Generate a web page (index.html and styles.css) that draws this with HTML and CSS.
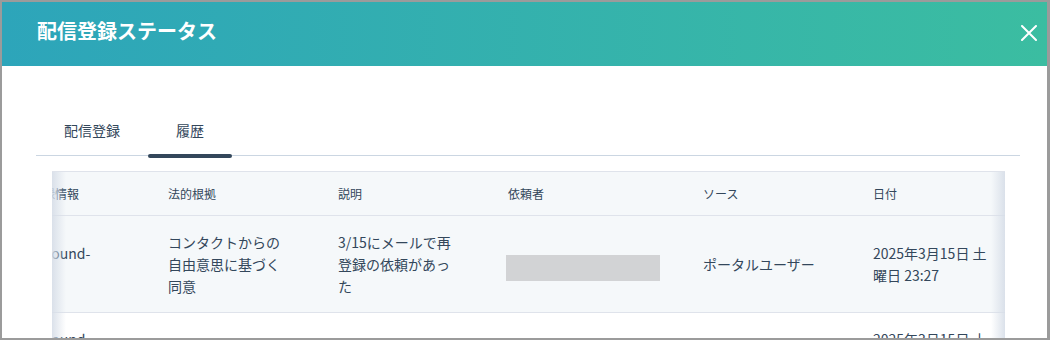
FILE: index.html
```html
<!DOCTYPE html>
<html lang="ja">
<head>
    <meta charset="UTF-8">
    <meta name="viewport" content="width=device-width, initial-scale=1.0">
    <title>配信登録ステータス</title>
    <link rel="stylesheet" href="styles.css">
</head>
<body>
    <div class="modal">
        <div class="modal-header">
            <h2 class="modal-title">配信登録ステータス</h2>
            <span class="close" aria-label="閉じる">
                <svg width="16" height="16" viewBox="0 0 16 16">
                    <path d="M1 1 L15 15 M15 1 L1 15" stroke="#fff" stroke-width="2" stroke-linecap="round"/>
                </svg>
            </span>
        </div>
        <div class="modal-body">
            <div class="tabs">
                <div class="tab">配信登録</div>
                <div class="tab active">履歴</div>
            </div>
            <div class="table-scroll">
                <table class="history">
                    <colgroup>
                        <col style="width: 161px">
                        <col style="width: 170px">
                        <col style="width: 170px">
                        <col style="width: 195px">
                        <col style="width: 170px">
                        <col style="width: 170px">
                    </colgroup>
                    <thead>
                        <tr>
                            <th>配信登録情報</th>
                            <th>法的根拠</th>
                            <th>説明</th>
                            <th>依頼者</th>
                            <th>ソース</th>
                            <th>日付</th>
                        </tr>
                    </thead>
                    <tbody>
                        <tr class="hover">
                            <td>background- mail</td>
                            <td>コンタクトからの自由意思に基づく同意</td>
                            <td>3/15にメールで再登録の依頼があった</td>
                            <td><span class="redacted"></span></td>
                            <td>ポータルユーザー</td>
                            <td>2025年3月15日 土曜日 23:27</td>
                        </tr>
                        <tr>
                            <td>background- mail</td>
                            <td>正当な利益</td>
                            <td>配信停止</td>
                            <td><span class="redacted"></span></td>
                            <td>ポータルユーザー</td>
                            <td>2025年3月15日 土曜日 23:20</td>
                        </tr>
                    </tbody>
                </table>
            </div>
        </div>
    </div>
</body>
</html>
```

FILE: styles.css
```css
body {
    margin: 0;
    background-color: #fff;
    font-family: "Noto Sans CJK JP", "Noto Sans", sans-serif;
    color: #33475b;
}
.modal {
    box-sizing: border-box;
    width: 1050px;
    height: 340px;
    border-style: solid;
    border-color: #9b9b9b;
    border-width: 2px 3px 2px 2px;
    overflow: hidden;
    background-color: #fff;
}
.modal-header {
    height: 64px;
    display: flex;
    align-items: center;
    justify-content: space-between;
    padding: 0 10px 6px 35px; /* title sits a bit above center */
    box-sizing: border-box;
    background: linear-gradient(to right, #2da5ba, #3bbda1);
}
.modal-title {
    margin: 0;
    font-size: 20px;
    font-weight: 700;
    color: #fff;
    line-height: 28px;
}
.close {
    display: flex;
    width: 16px;
    height: 16px;
    margin-top: 4px;
    cursor: pointer;
}
.modal-body {
    padding: 40px 27px 0 34px;
}
.tabs {
    display: flex;
    border-bottom: 1px solid #cbd6e2;
}
.tab {
    position: relative;
    padding: 13px 28px 14px;
    font-size: 14px;
    line-height: 22px;
    cursor: pointer;
}
.tab.active::after { /* indicator sits on the tab line */
    content: "";
    position: absolute;
    left: 0;
    right: 0;
    bottom: -3px;
    height: 4px;
    border-radius: 2px;
    background-color: #33475b;
}
.table-scroll {
    position: relative;
    margin: 15px 15px 0 16px;
    overflow: hidden;
    border-top: 1px solid #dfe3eb;
}
.table-scroll::before,
.table-scroll::after {
    content: "";
    position: absolute;
    top: 0;
    bottom: 0;
    width: 14px;
    z-index: 1;
}
.table-scroll::before {
    left: 0;
    background: linear-gradient(to right, rgba(215, 222, 232, 0.9), rgba(255, 255, 255, 0));
}
.table-scroll::after {
    right: 0;
    background: linear-gradient(to left, rgba(215, 222, 232, 0.9), rgba(255, 255, 255, 0));
}
.history {
    table-layout: fixed;
    width: 1036px;
    margin-left: -69px; /* scrolled part of the table */
    border-collapse: collapse;
}
.history th {
    height: 43px;
    padding: 0 24px;
    text-align: left;
    font-size: 12px;
    font-weight: 400;
    background-color: #f5f8fa;
    border-bottom: 1px solid #dfe3eb;
    white-space: nowrap;
}
.history td {
    padding: 15px 24px;
    font-size: 14px;
    line-height: 22px;
    vertical-align: middle;
    border-bottom: 1px solid #dfe3eb;
}
.history tr.hover td {
    background-color: #f5f8fa;
}
.redacted {
    display: block;
    width: 154px;
    height: 26px;
    margin: 8px 0 0 -2px;
    background-color: #d2d3d5;
}
```
